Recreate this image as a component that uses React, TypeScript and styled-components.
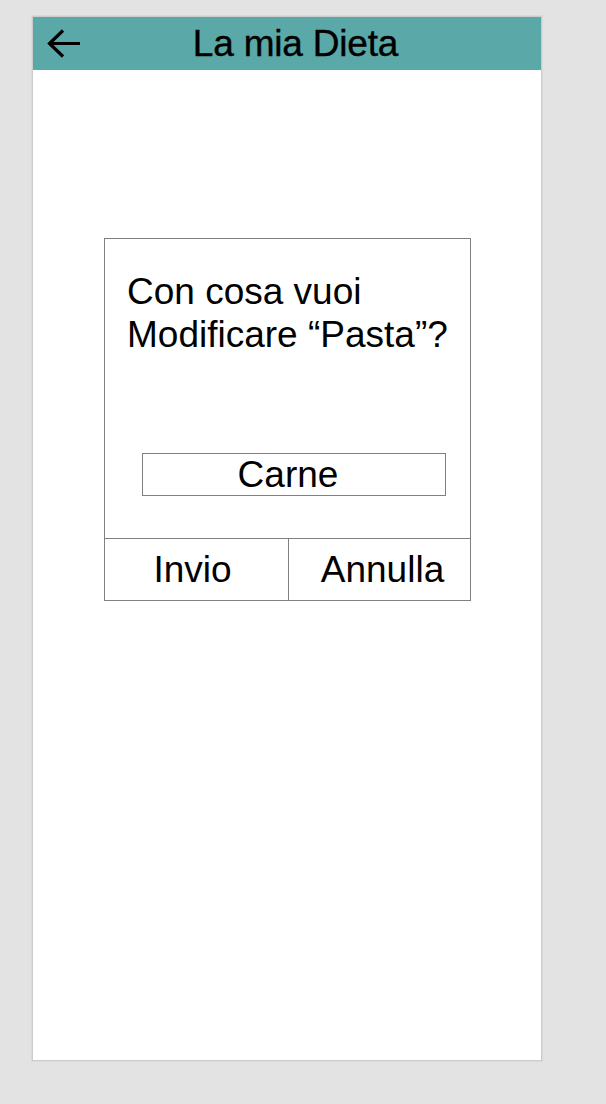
import React from "react";
import styled, { createGlobalStyle } from "styled-components";

const GlobalStyle = createGlobalStyle`
  html, body {
    margin: 0;
    padding: 0;
    background: #e3e3e3;
    font-family: "Liberation Sans", Arial, sans-serif;
    color: #000;
  }
`;

const Page = styled.div`
  padding: 16px 0 0 32px;
  min-height: 1104px;
  box-sizing: border-box;
`;

const Phone = styled.div`
  width: 510px;
  height: 1045px;
  box-sizing: border-box;
  border: 1px solid #cccccc;
  box-shadow: 0 0 0 1px #dadada;
  background: #ffffff;
  display: flex;
  flex-direction: column;
`;

const Header = styled.header`
  height: 53px;
  flex: none;
  background: #5aa8a7;
  display: flex;
  align-items: center;
  padding: 0 0 0 13px;
`;

const BackButton = styled.button`
  border: none;
  background: none;
  padding: 0;
  margin: 0;
  display: flex;
  width: 34px;
  height: 30px;
  cursor: pointer;
`;

const Title = styled.h1`
  flex: 1;
  margin: 0;
  padding-right: 30px;
  text-align: center;
  font-size: 37px;
  line-height: 41px;
  font-weight: 400;
  -webkit-text-stroke: 0.4px #000;
  letter-spacing: -0.2px;
`;

const Content = styled.main`
  flex: 1;
  padding: 168px 0 0 71px;
`;

const Dialog = styled.section`
  width: 367px;
  box-sizing: border-box;
  border: 1px solid #808080;
  display: flex;
  flex-direction: column;
`;

const DialogBody = styled.div`
  height: 299px;
  box-sizing: border-box;
  padding: 31px 20px 42px 22px;
  display: flex;
  flex-direction: column;
`;

const Question = styled.p`
  margin: 0;
  font-size: 37px;
  line-height: 43px;
`;

const Choice = styled.div`
  margin: auto 4px 0 15px;
  height: 43px;
  box-sizing: border-box;
  border: 1px solid #808080;
  padding-right: 12px;
  display: flex;
  align-items: center;
  justify-content: center;
  font-size: 37px;
  line-height: 40px;
`;

const Actions = styled.div`
  display: grid;
  grid-template-columns: 183px 1fr;
  border-top: 1px solid #808080;
  height: 61px;
`;

const ActionButton = styled.button<{ $divider?: boolean }>`
  border: none;
  border-left: ${(p) => (p.$divider ? "1px solid #808080" : "none")};
  background: none;
  padding: 0;
  margin: 0;
  font-family: "Liberation Sans", Arial, sans-serif;
  font-size: 37px;
  line-height: 41px;
  color: #000;
  display: flex;
  align-items: center;
  justify-content: center;
  cursor: pointer;
`;

const BackArrow = () => (
  <svg width="34" height="30" viewBox="0 0 34 30" fill="none">
    <path
      d="M34 14.5 H4 M17 1.5 L3.5 14.5 L17 27.5"
      stroke="#000"
      strokeWidth="3.2"
    />
  </svg>
);

export default function App() {
  return (
    <>
      <GlobalStyle />
      <Page>
        <Phone>
          <Header>
            <BackButton aria-label="Indietro">
              <BackArrow />
            </BackButton>
            <Title>La mia Dieta</Title>
          </Header>
          <Content>
            <Dialog>
              <DialogBody>
                <Question>
                  Con cosa vuoi
                  <br />
                  Modificare “Pasta”?
                </Question>
                <Choice>Carne</Choice>
              </DialogBody>
              <Actions>
                <ActionButton style={{ paddingRight: 8 }}>Invio</ActionButton>
                <ActionButton $divider style={{ paddingLeft: 6 }}>
                  Annulla
                </ActionButton>
              </Actions>
            </Dialog>
          </Content>
        </Phone>
      </Page>
    </>
  );
}
